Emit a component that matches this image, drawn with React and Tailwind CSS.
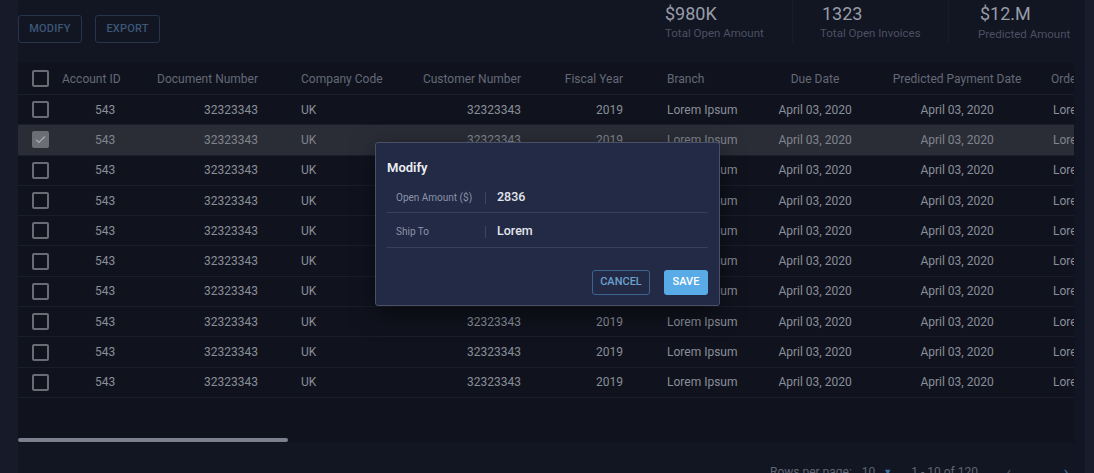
const columns = [
  { key: 'account', label: 'Account ID', w: 'w-[80px]', head: 'pl-[2px] text-left', cell: 'pl-[35px] text-left' },
  { key: 'doc', label: 'Document Number', w: 'w-[122px]', head: 'pr-[4px] text-right', cell: 'pr-[4px] text-right' },
  { key: 'company', label: 'Company Code', w: 'w-[158px]', head: 'pl-[39px] text-left', cell: 'pl-[39px] text-left' },
  { key: 'customer', label: 'Customer Number', w: 'w-[105px]', head: 'pr-[4px] text-right', cell: 'pr-[4px] text-right' },
  { key: 'fiscal', label: 'Fiscal Year', w: 'w-[102px]', head: 'pr-[4px] text-right', cell: 'pr-[4px] text-right' },
  { key: 'branch', label: 'Branch', w: 'w-[133px]', head: 'pl-[40px] text-left', cell: 'pl-[40px] text-left' },
  { key: 'due', label: 'Due Date', w: 'w-[110px]', head: 'text-center', cell: 'text-center' },
  { key: 'predicted', label: 'Predicted Payment Date', w: 'w-[174px]', head: 'text-center', cell: 'text-center' },
  { key: 'order', label: 'Order Type', w: 'w-[80px]', head: 'pl-[7px] text-left', cell: 'pl-[9px] text-left' },
]

const row = {
  account: '543',
  doc: '32323343',
  company: 'UK',
  customer: '32323343',
  fiscal: '2019',
  branch: 'Lorem Ipsum',
  due: 'April 03, 2020',
  predicted: 'April 03, 2020',
  order: 'Lorem',
}

const rows = Array.from({ length: 10 }, (_, i) => ({ ...row, id: i, checked: i === 1 }))

function Checkbox({ checked }) {
  if (checked) {
    return (
      <span className="flex h-[17px] w-[17px] items-center justify-center rounded-[2px] bg-[#6c6e76]">
        <svg width="13" height="13" viewBox="0 0 24 24" fill="none" stroke="#a9abb1" strokeWidth="2.2">
          <path d="M4 12.5l5 5L20 6.5" />
        </svg>
      </span>
    )
  }
  return <span className="block h-[17px] w-[17px] rounded-[2px] border-2 border-[#696c74]" />
}

function Stat({ value, label, labelClass = '' }) {
  return (
    <div className="flex flex-col">
      <span className="text-[18px] leading-[21px] text-[#979ca7]">{value}</span>
      <span className={`mt-[2px] whitespace-nowrap text-[11.5px] leading-[14px] text-[#4a5163] ${labelClass}`}>{label}</span>
    </div>
  )
}

export default function App() {
  return (
    <div
      className="relative flex h-[473px] w-[1094px] overflow-hidden bg-[#171b29]"
      style={{ fontFamily: 'Roboto, "Liberation Sans", sans-serif' }}
    >
      {/* left gutter */}
      <div className="w-[18px] shrink-0 bg-[#171b29]" />

      {/* main panel */}
      <div className="flex w-[1057px] shrink-0 flex-col bg-[#121522]">
        {/* toolbar */}
        <div className="flex h-[63px] shrink-0 items-start">
          <div className="flex gap-[13px] pt-[15px]">
            <button className="flex h-[28px] w-[64px] items-center justify-center rounded-[3px] border border-[#273549] text-[11px] font-medium tracking-[0.2px] text-[#3c5877]">
              MODIFY
            </button>
            <button className="flex h-[28px] w-[65px] items-center justify-center rounded-[3px] border border-[#273549] text-[11px] font-medium tracking-[0.2px] text-[#3c5877]">
              EXPORT
            </button>
          </div>
          <div className="ml-auto flex h-[43px] pt-[3px]">
            <div className="w-[127px]">
              <Stat value="$980K" label="Total Open Amount" />
            </div>
            <div className="-mt-[3px] h-[43px] w-px bg-[#191d2b]" />
            <div className="w-[155px] pl-[29px]">
              <Stat value="1323" label="Total Open Invoices" labelClass="-ml-[2px]" />
            </div>
            <div className="-mt-[3px] h-[43px] w-px bg-[#191d2b]" />
            <div className="w-[126px] pl-[31px]">
              <Stat value="$12.M" label="Predicted Amount" labelClass="-ml-[2px] mt-[3px]" />
            </div>
          </div>
        </div>

        {/* table */}
        <div className="flex h-[380px] shrink-0 flex-col overflow-hidden bg-[#10131e]">
          <div className="w-[1056px] overflow-hidden">
            <div className="flex h-[32px] w-max items-center border-b border-[#1b1f2c] text-[12px] text-[#646977]">
              <div className="flex w-[42px] shrink-0 pl-[14px]">
                <Checkbox />
              </div>
              {columns.map((c) => (
                <div key={c.key} className={`${c.w} shrink-0 whitespace-nowrap ${c.head}`}>
                  {c.label}
                </div>
              ))}
            </div>
            {rows.map((r) => (
              <div
                key={r.id}
                className={`flex h-[30.3px] w-max items-center border-b border-[#1a1e2a] text-[12px] ${
                  r.checked ? 'bg-[#2a2d36] text-[#80848d]' : 'text-[#8a8e98]'
                }`}
              >
                <div className="flex w-[42px] shrink-0 pl-[14px]">
                  <Checkbox checked={r.checked} />
                </div>
                {columns.map((c) => (
                  <div key={c.key} className={`${c.w} shrink-0 whitespace-nowrap ${c.cell}`}>
                    {r[c.key]}
                  </div>
                ))}
              </div>
            ))}
          </div>
          <div className="mt-auto mb-[1px] h-[4px] w-[270px] shrink-0 rounded-full bg-[#7c808e]" />
        </div>

        {/* pagination */}
        <div className="flex shrink-0 items-center pt-[20px] text-[12px] leading-[18px] text-[#5f6573]">
          <span className="ml-[752px]">Rows per page:</span>
          <span className="ml-[10px]">10</span>
          <span className="ml-[8px] text-[9px] text-[#3f6f9c]">▼</span>
          <span className="ml-[19px]">1 - 10 of 120</span>
          <span className="ml-[28px] text-[18px] text-[#4b5264]">‹</span>
          <span className="ml-[52px] text-[18px] text-[#3f6f9c]">›</span>
        </div>
      </div>

      {/* right gutter */}
      <div className="w-[10px] shrink-0 bg-[#121523]" />
      <div className="flex-1 bg-[#191d2b]" />

      {/* modify dialog */}
      <div className="absolute left-[375px] top-[142px] flex h-[164px] w-[345px] flex-col rounded-[3px] border border-[#4a5065] bg-[#222a45] px-[11px] shadow-[0_8px_24px_rgba(0,0,0,0.5)]">
        <div className="pt-[16px] text-[13px] font-semibold leading-[18px] text-[#eceef3]">Modify</div>
        <div className="mt-[6px] flex h-[30px] items-center border-b border-[#35405c]">
          <span className="w-[98px] pl-[9px] text-[10px] text-[#8a93aa]">Open Amount ($)</span>
          <span className="h-[12px] w-px bg-[#3d4660]" />
          <span className="pl-[11px] text-[12.5px] font-medium text-[#e2e5ec]">2836</span>
        </div>
        <div className="flex h-[35px] items-center border-b border-[#35405c] pt-[3px]">
          <span className="w-[98px] pl-[9px] text-[10px] text-[#8a93aa]">Ship To</span>
          <span className="h-[12px] w-px bg-[#3d4660]" />
          <span className="pl-[11px] text-[12.5px] font-medium text-[#e2e5ec]">Lorem</span>
        </div>
        <div className="mt-[22px] flex justify-end gap-[14px]">
          <button className="flex h-[25px] w-[58px] items-center justify-center rounded-[3px] border border-[#3b6590] text-[11px] font-medium text-[#6d9fcc]">
            CANCEL
          </button>
          <button className="flex h-[25px] w-[44px] items-center justify-center rounded-[3px] bg-[#58abe6] text-[11px] font-medium text-white">
            SAVE
          </button>
        </div>
      </div>
    </div>
  )
}
